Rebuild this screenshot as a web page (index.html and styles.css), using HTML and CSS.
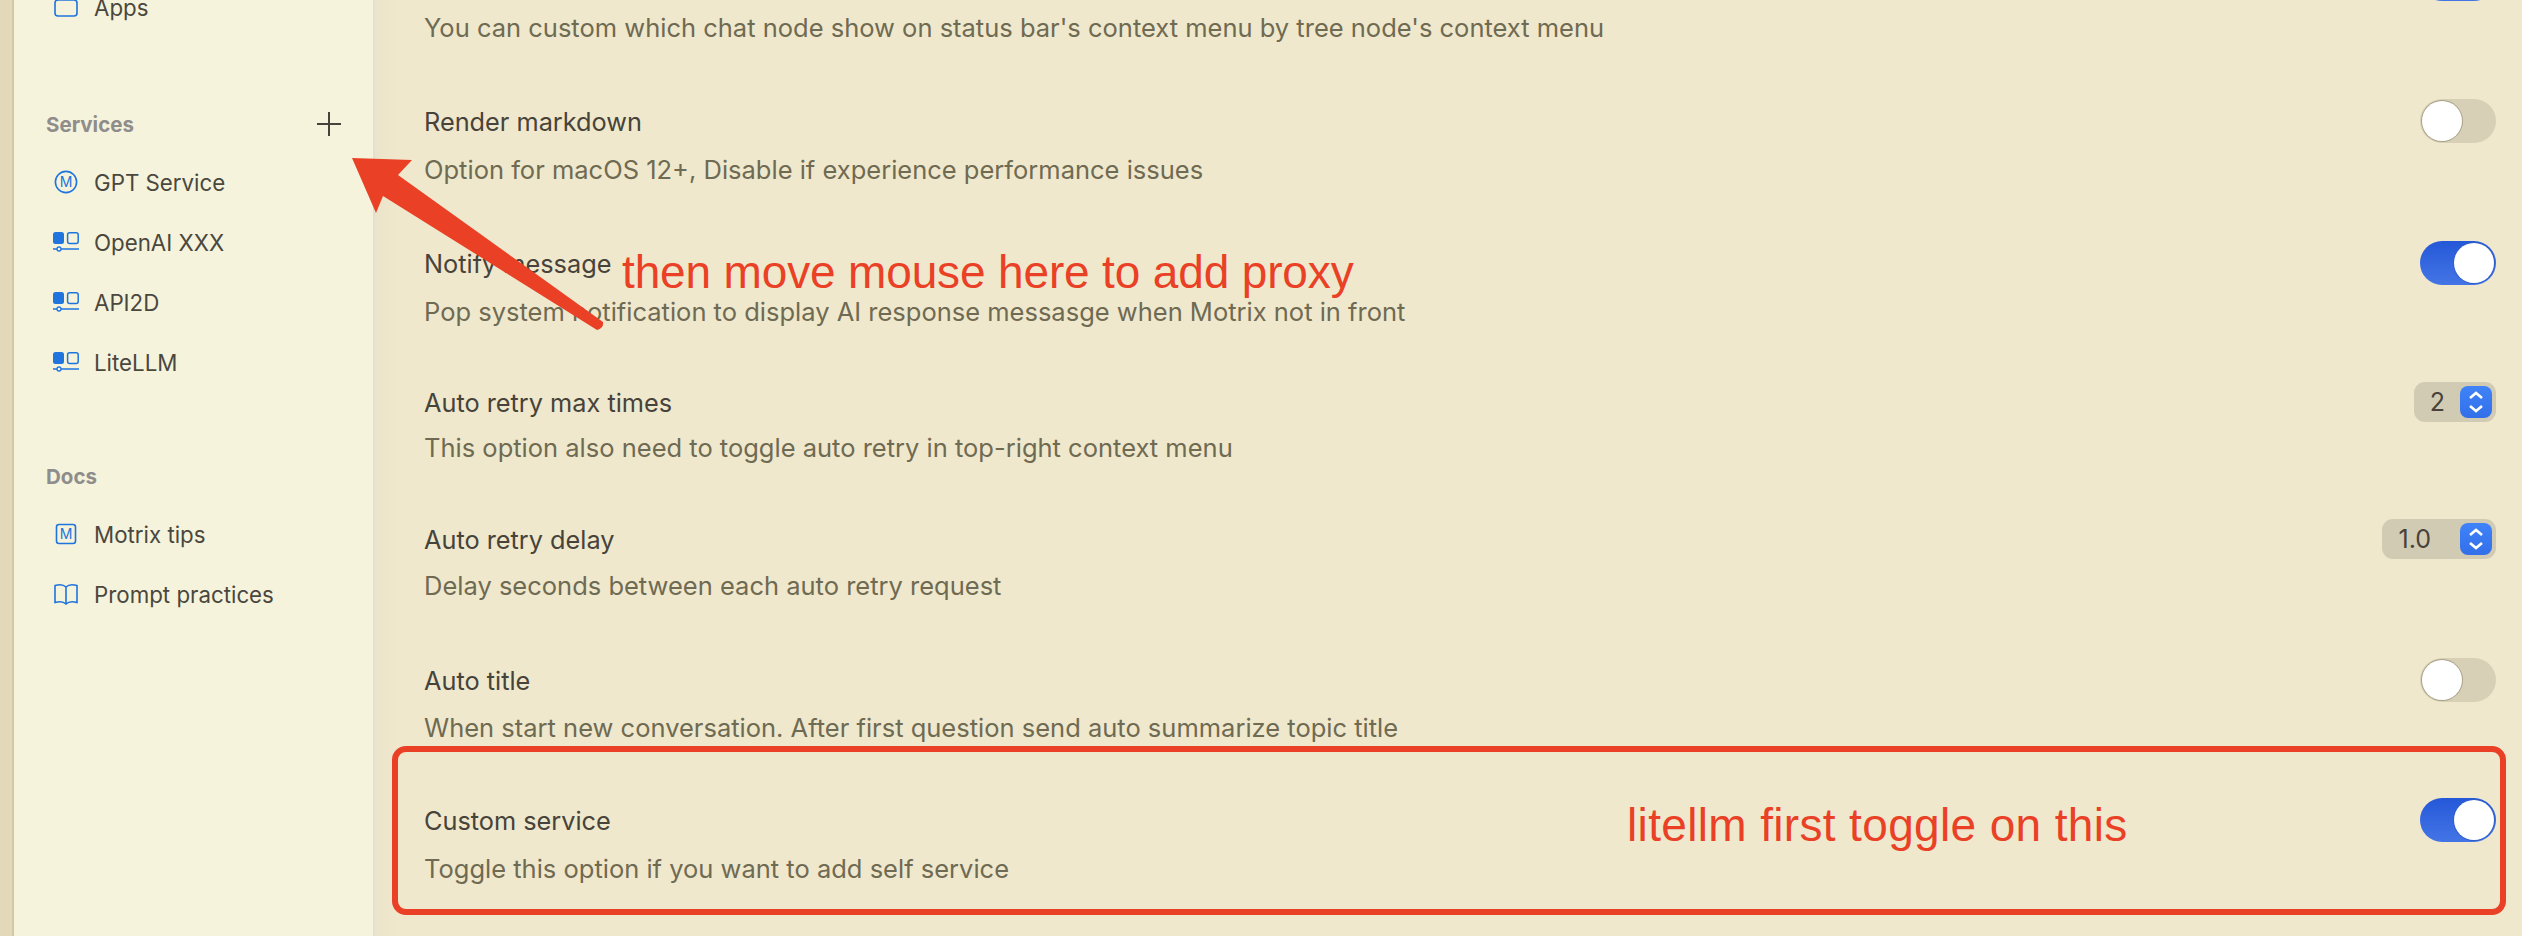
FILE: index.html
```html
<!DOCTYPE html>
<html lang="en">
<head>
  <meta charset="UTF-8">
  <title>Motrix settings</title>
  <link rel="stylesheet" href="styles.css">
</head>
<body>
  <svg class="defs" width="0" height="0">
    <symbol id="proxy" viewBox="0 0 26 20">
      <rect x="0" y="0" width="11" height="12" rx="2.5" fill="#1f74de"/>
      <rect x="14.6" y="0.8" width="10.6" height="10.6" rx="2" fill="none" stroke="#1f74de" stroke-width="1.5"/>
      <path d="M0 17h4M8 17h18" stroke="#1f74de" stroke-width="1.5"/>
      <circle cx="6" cy="17" r="2" fill="none" stroke="#1f74de" stroke-width="1.3"/>
    </symbol>
  </svg>

  <div class="app">
    <div class="strip"></div>

    <aside class="sidebar">
      <div class="nav-item">
        <svg class="nav-icon" viewBox="0 0 26 26">
          <path d="M4 1h18" stroke="#1f74de" stroke-width="2" fill="none"/>
          <rect x="2" y="6" width="22" height="16" rx="3" fill="none" stroke="#1f74de" stroke-width="1.6"/>
        </svg>
        <span>Apps</span>
      </div>

      <div class="nav-head nav-head-services">
        <span>Services</span>
        <svg class="plus" viewBox="0 0 24 24"><path d="M12 0v24M0 12h24" stroke="#45433b" stroke-width="2"/></svg>
      </div>
      <div class="nav-item">
        <svg class="nav-icon" viewBox="0 0 26 26">
          <circle cx="13" cy="13" r="10.6" fill="none" stroke="#1f74de" stroke-width="1.6"/>
          <text x="13" y="18" text-anchor="middle" class="icon-letter">M</text>
        </svg>
        <span>GPT Service</span>
      </div>
      <div class="nav-item"><svg class="nav-icon"><use href="#proxy"/></svg><span>OpenAI XXX</span></div>
      <div class="nav-item"><svg class="nav-icon"><use href="#proxy"/></svg><span>API2D</span></div>
      <div class="nav-item"><svg class="nav-icon"><use href="#proxy"/></svg><span>LiteLLM</span></div>

      <div class="nav-head nav-head-docs"><span>Docs</span></div>
      <div class="nav-item">
        <svg class="nav-icon" viewBox="0 0 26 26">
          <rect x="3.5" y="3.5" width="19" height="19" rx="2.5" fill="none" stroke="#1f74de" stroke-width="1.6"/>
          <text x="13" y="18" text-anchor="middle" class="icon-letter">M</text>
        </svg>
        <span>Motrix tips</span>
      </div>
      <div class="nav-item">
        <svg class="nav-icon" viewBox="0 0 26 26">
          <path d="M13 6C10.500 3.500 5.500 3.500 2 4.500V21.500C5.500 20.500 10.500 20.500 13 23C15.500 20.500 20.500 20.500 24 21.500V4.500C20.500 3.500 15.500 3.500 13 6ZM13 6V23" fill="none" stroke="#1f74de" stroke-width="1.6"/>
        </svg>
        <span>Prompt practices</span>
      </div>
    </aside>

    <main class="main">
      <section class="setting first">
        <div class="setting-head"><span></span><div class="toggle on"></div></div>
        <p class="desc">You can custom which chat node show on status bar's context menu by tree node's context menu</p>
      </section>
      <section class="setting">
        <div class="setting-head"><span>Render markdown</span><div class="toggle"></div></div>
        <p class="desc">Option for macOS 12+, Disable if experience performance issues</p>
      </section>
      <section class="setting">
        <div class="setting-head"><span>Notify message</span><div class="toggle on"></div></div>
        <p class="desc">Pop system notification to display AI response messasge when Motrix not in front</p>
      </section>
      <section class="setting">
        <div class="setting-head">
          <span>Auto retry max times</span>
          <div class="stepper"><span class="stepper-value">2</span><div class="stepper-btn"><svg viewBox="0 0 32 32"><path d="M10 12l6-5 6 5M10 20l6 5 6-5" fill="none" stroke="#fff" stroke-width="2.600"/></svg></div></div>
        </div>
        <p class="desc">This option also need to toggle auto retry in top-right context menu</p>
      </section>
      <section class="setting">
        <div class="setting-head">
          <span>Auto retry delay</span>
          <div class="stepper stepper-wide"><span class="stepper-value">1.0</span><div class="stepper-btn"><svg viewBox="0 0 32 32"><path d="M10 12l6-5 6 5M10 20l6 5 6-5" fill="none" stroke="#fff" stroke-width="2.600"/></svg></div></div>
        </div>
        <p class="desc">Delay seconds between each auto retry request</p>
      </section>
      <section class="setting">
        <div class="setting-head"><span>Auto title</span><div class="toggle"></div></div>
        <p class="desc">When start new conversation. After first question send auto summarize topic title</p>
      </section>
      <section class="setting">
        <div class="setting-head"><span>Custom service</span><div class="toggle on"></div></div>
        <p class="desc">Toggle this option if you want to add self service</p>
      </section>
    </main>
  </div>

  <!-- annotations drawn on top of the screenshot -->
  <svg class="arrow" width="2522" height="936" viewBox="0 0 2522 936">
    <path d="M352 158L412 160L398 175L603 322Q604 328 597 330L383 196L376 213Z" fill="#e94026"/>
  </svg>
  <div class="note note-proxy">then move mouse here to add proxy</div>
  <div class="note note-toggle">litellm first toggle on this</div>
  <div class="callout"></div>
</body>
</html>
```

FILE: styles.css
```css
html, body {
  margin: 0;
  height: 100%;
  overflow: hidden;
}
body {
  font-family: Inter, "Noto Sans", sans-serif;
  background: #efe8cd;
}
.defs {
  position: absolute;
}
.app {
  display: flex;
  height: 936px;
  overflow: hidden;
}
.strip {
  width: 12px;
  flex: none;
  background: #e3d9ba;
  border-right: 2px solid #d3c7a6;
}
.sidebar {
  width: 361px;
  flex: none;
  box-sizing: border-box;
  padding: 0 0 0 39px;
  background: #f6f3dc;
  border-right: 2px solid #e4e0cf;
  font-size: 22.3px;
  color: #4a473e;
}
.nav-item {
  display: flex;
  align-items: center;
  height: 60px;
  gap: 15px;
}
.nav-item:first-child {
  margin-top: -23px;
}
.nav-icon {
  width: 26px;
  height: 26px;
  flex: none;
}
.icon-letter {
  font-size: 14px;
  fill: #1f74de;
}
.nav-head {
  display: flex;
  align-items: center;
  justify-content: space-between;
  height: 56px;
  margin-left: -7px;
  padding-right: 32px;
  font-size: 20.5px;
  font-weight: 700;
  color: #8f8d8b;
}
.nav-head-services {
  margin-top: 59px;
}
.nav-head-docs {
  margin-top: 56px;
}
.plus {
  width: 24px;
  height: 24px;
}
.main {
  flex: 1;
  box-sizing: border-box;
  padding: 0 26px 0 49px;
  background: linear-gradient(90deg, #ebe4ca 0, #efe8cd 24px);
}
.setting {
  margin-bottom: 58px;
}
.setting.first {
  margin-top: -41px;
}
.setting-head {
  display: flex;
  align-items: center;
  justify-content: space-between;
  height: 40px;
  font-size: 25.3px;
  color: #47433a;
}
.desc {
  margin: 14px 0 0;
  font-size: 25.5px;
  line-height: 30px;
  color: #6f6a52;
}
/* the rows are not quite evenly spaced in the app */
.setting:nth-child(3) {
  margin-bottom: 55px;
}
.setting:nth-child(4) {
  margin-bottom: 56px;
}
.setting:nth-child(4) .desc {
  margin-top: 11px;
}
.setting:nth-child(5) {
  margin-bottom: 59px;
}
.setting:nth-child(5) .desc {
  margin-top: 12px;
}
.setting:nth-child(6) {
  margin-bottom: 57px;
}
.setting:nth-child(6) .desc {
  margin-top: 13px;
}
.toggle {
  position: relative;
  width: 76px;
  height: 44px;
  border-radius: 22px;
  background: #d8d0b6;
}
.toggle::after {
  content: "";
  position: absolute;
  top: 2px;
  left: 2px;
  width: 40px;
  height: 40px;
  border-radius: 50%;
  background: #fff;
  box-shadow: 0 0 0 1px #a9a28a;
}
.toggle.on {
  background: linear-gradient(180deg, #2558d8, #4475e6);
}
.toggle.on::after {
  left: 34px;
  box-shadow: 0 0 0 1px #2f5fc8;
}
.stepper {
  display: flex;
  align-items: center;
  justify-content: flex-end;
  box-sizing: border-box;
  width: 82px;
  height: 40px;
  padding-right: 4px;
  border-radius: 11px;
  background: #d2cbb3;
  font-size: 25px;
  color: #47433a;
}
.stepper-wide {
  width: 114px;
}
.stepper-value {
  margin-right: 15px;
}
.stepper-wide .stepper-value {
  margin-right: 29px;
}
.stepper-btn {
  width: 32px;
  height: 32px;
  border-radius: 8px;
  background: linear-gradient(180deg, #3f83f9, #326fe8);
}
.stepper-btn svg {
  display: block;
  width: 32px;
  height: 32px;
}
.arrow {
  position: absolute;
  top: 0;
  left: 0;
}
.note {
  position: absolute;
  font-family: "Liberation Sans", sans-serif;
  font-size: 46px;
  line-height: 54px;
  color: #e94026;
  white-space: nowrap;
}
.note-proxy {
  left: 622px;
  top: 245px;
  letter-spacing: -0.15px;
}
.note-toggle {
  left: 1627px;
  top: 798px;
  letter-spacing: 0.35px;
}
.callout {
  position: absolute;
  left: 392px;
  top: 746px;
  width: 2114px;
  height: 169px;
  box-sizing: border-box;
  border: 6px solid #e94026;
  border-radius: 14px;
}
```
